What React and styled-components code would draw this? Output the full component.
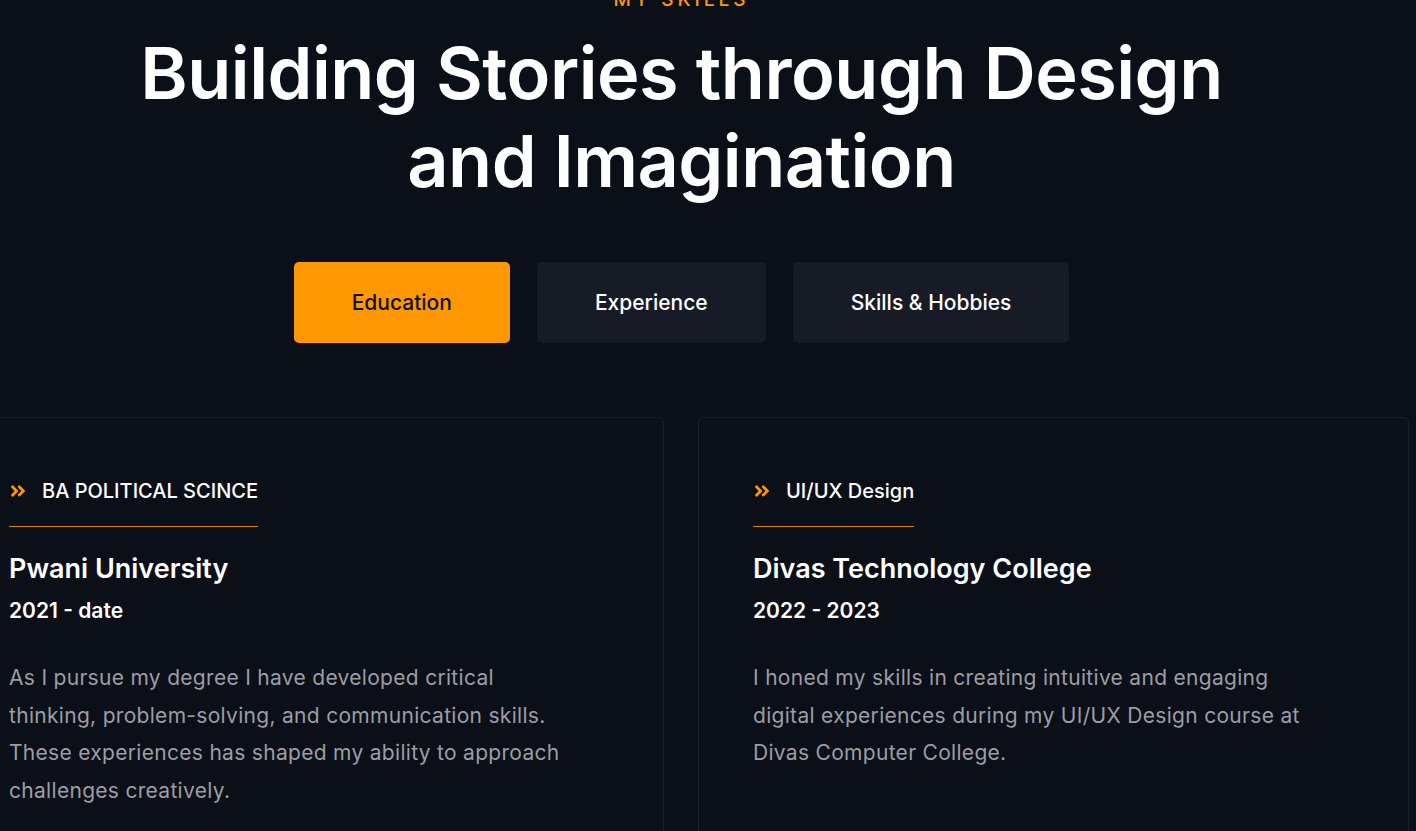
import React, { useState } from 'react'
import styled, { createGlobalStyle } from 'styled-components'
import { FaAngleDoubleRight } from 'react-icons/fa'

const GlobalStyle = createGlobalStyle`
  body {
    margin: 0;
    background: #0a0f18;
    font-family: Inter, "Noto Sans", sans-serif;
    color: #fff;
  }
`

const tabs = ['Education', 'Experience', 'Skills & Hobbies']

const education = [
  {
    course: 'BA POLITICAL SCINCE',
    school: 'Pwani University',
    years: '2021 - date',
    text: 'As I pursue my degree I have developed critical thinking, problem-solving, and communication skills. These experiences has shaped my ability to approach challenges creatively.',
  },
  {
    course: 'UI/UX Design',
    school: 'Divas Technology College',
    years: '2022 - 2023',
    text: 'I honed my skills in creating intuitive and engaging digital experiences during my UI/UX Design course at Divas Computer College.',
  },
]

const App = () => {
  const [active, setActive] = useState('Education')

  return (
    <Page>
      <GlobalStyle />
      <Section>
        <Eyebrow>MY SKILLS</Eyebrow>
        <Title>
          Building Stories through Design
          <br />
          and Imagination
        </Title>
        <Tabs>
          {tabs.map((t) => (
            <Tab key={t} $active={active === t} onClick={() => setActive(t)}>
              {t}
            </Tab>
          ))}
        </Tabs>
        <Cards>
          {education.map((item) => (
            <Card key={item.school}>
              <Course>
                <FaAngleDoubleRight />
                {item.course}
              </Course>
              <School>{item.school}</School>
              <Years>{item.years}</Years>
              <Text>{item.text}</Text>
            </Card>
          ))}
        </Cards>
      </Section>
    </Page>
  )
}

export default App

const Page = styled.div`
  width: 100%;
  min-height: 100vh;
  overflow: hidden;
`

const Section = styled.section`
  width: 1455px;
  margin-left: -46px;
  display: flex;
  flex-direction: column;
  align-items: center;
  text-align: center;
`

const Eyebrow = styled.p`
  margin: -12px 0 0;
  color: #ff9800;
  font-size: 19px;
  font-weight: 500;
  letter-spacing: 4px;
  line-height: 24px;
`

const Title = styled.h2`
  margin: 17px 0 0;
  font-size: 72px;
  font-weight: 600;
  line-height: 88px;
  letter-spacing: -0.5px;
`

const Tabs = styled.div`
  display: flex;
  gap: 27px;
  margin-top: 57px;
`

const Tab = styled.button`
  height: 81px;
  padding: 0 58px;
  border: none;
  border-radius: 5px;
  background: ${(p) => (p.$active ? '#ff9800' : '#161b26')};
  color: ${(p) => (p.$active ? '#0a0f18' : '#fff')};
  font-family: inherit;
  font-size: 21px;
  font-weight: 500;
  cursor: pointer;
`

const Cards = styled.div`
  display: grid;
  grid-template-columns: 710px 711px;
  gap: 34px;
  margin-top: 74px;
  text-align: left;
`

const Card = styled.div`
  min-height: 440px;
  padding: 58px 54px;
  border: 1px solid #1a202a;
  border-radius: 6px;
`

const Course = styled.h4`
  display: inline-flex;
  align-items: center;
  gap: 15px;
  margin: 0;
  padding-bottom: 20px;
  border-bottom: 1px solid rgba(255, 152, 0, 0.85);
  font-size: 20px;
  font-weight: 500;
  line-height: 30px;

  svg {
    color: #ff9800;
    width: 18px;
    height: 18px;
  }
`

const School = styled.h3`
  margin: 22px 0 0;
  font-size: 27px;
  font-weight: 600;
  line-height: 40px;
`

const Years = styled.h5`
  margin: 7px 0 0;
  font-size: 21px;
  font-weight: 600;
  line-height: 30px;
`

const Text = styled.p`
  max-width: 572px;
  margin: 33px 0 0;
  color: #9c9ea4;
  font-size: 21px;
  letter-spacing: 0.3px;
  line-height: 37.5px;
`
